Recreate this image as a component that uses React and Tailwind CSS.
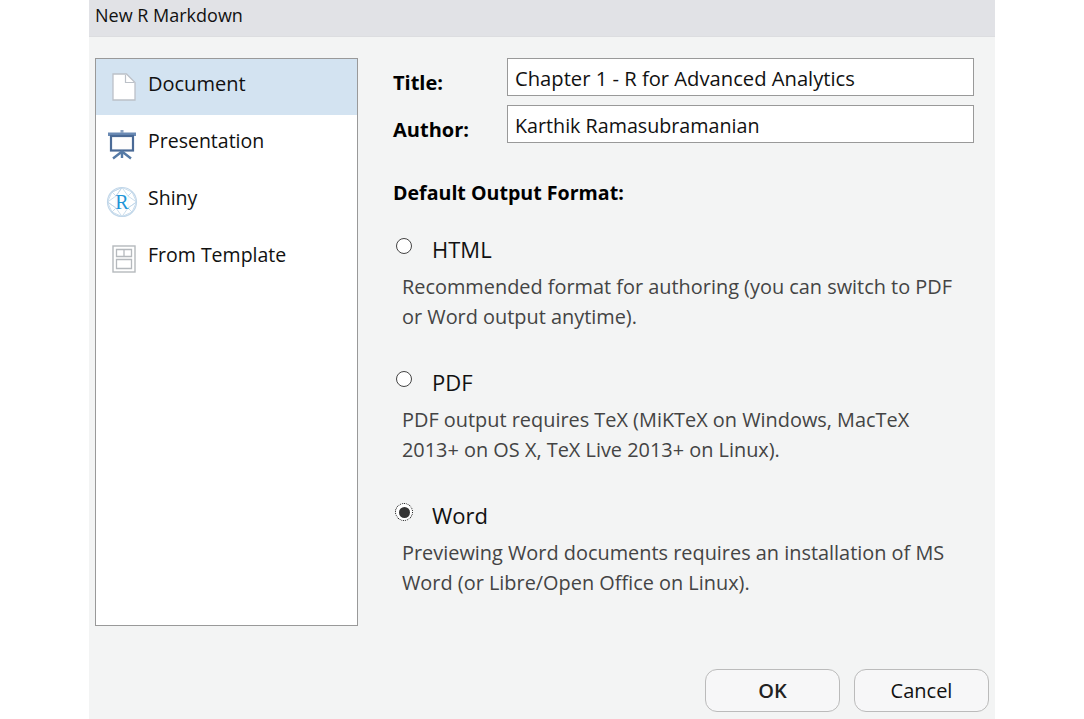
import React from 'react';

const FONT = 'font-["Open_Sans","Noto_Sans",sans-serif]';

function DocIcon() {
  return (
    <svg className="ml-[3px]" width="24" height="28" viewBox="0 0 24 28" fill="none">
      <path d="M1 1H14.5L23 9.5V27H1Z" fill="#fff" stroke="#bcc1c8" strokeWidth="1.3" />
      <path d="M13.5 2V9.5H22" stroke="#bcc1c8" strokeWidth="1.2" fill="none" />
    </svg>
  );
}

function PresentationIcon() {
  return (
    <svg width="30" height="30" viewBox="0 0 30 30" fill="none">
      <rect x="1" y="2.5" width="28" height="3.5" fill="#6a8ab4" />
      <rect x="13.5" y="0" width="3" height="3" fill="#8aa2c2" />
      <rect x="4" y="6" width="22" height="14.5" fill="#fdfdfd" stroke="#4a6a96" strokeWidth="2.2" />
      <path d="M15 20.5V28M15 21.5L6 28.5M15 21.5L24 28.5" stroke="#557aa6" strokeWidth="2.4" />
    </svg>
  );
}

function ShinyIcon() {
  return (
    <svg width="32" height="32" viewBox="0 0 32 32" fill="none">
      <circle cx="16" cy="16" r="14.5" fill="#fff" stroke="#c3d8ea" strokeWidth="1.2" />
      <path
        d="M16 1.5L26 6L30.5 16L26 26L16 30.5L6 26L1.5 16L6 6ZM16 1.5L22 10L30.5 16L22 22L16 30.5L10 22L1.5 16L10 10ZM10 10H22V22H10ZM6 6L10 10M26 6L22 10M26 26L22 22M6 26L10 22M16 1.5L10 10M16 1.5L6 6M30.5 16L22 22M1.5 16L10 22"
        stroke="#bfd5e8"
        strokeWidth="0.8"
      />
      <circle cx="16" cy="16" r="8.5" fill="#fff" fillOpacity="0.75" />
      <text x="16" y="23" textAnchor="middle" fontFamily="Liberation Serif, serif" fontSize="20" fill="#1f95d8">R</text>
    </svg>
  );
}

function TemplateIcon() {
  return (
    <svg className="ml-[3px]" width="24" height="28" viewBox="0 0 24 28" fill="none">
      <rect x="1" y="1" width="22" height="26" fill="#fff" stroke="#b5b9bd" strokeWidth="1.4" />
      <path d="M4.5 4.5H19.5V11.5H4.5ZM12 4.5V11.5M4.5 14.5H19.5V23.5H4.5Z" stroke="#b5b9bd" strokeWidth="1.3" />
    </svg>
  );
}

function Radio({ checked }) {
  return (
    <span
      className={`flex h-[16px] w-[16px] items-center justify-center rounded-full bg-white ${
        checked ? 'outline-1 outline-dotted outline-black' : 'border border-[#444]'
      }`}
    >
      {checked && <span className="h-[11px] w-[11px] rounded-full bg-[#333]" />}
    </span>
  );
}

const types = [
  { label: 'Document', icon: <DocIcon />, active: true },
  { label: 'Presentation', icon: <PresentationIcon /> },
  { label: 'Shiny', icon: <ShinyIcon /> },
  { label: 'From Template', icon: <TemplateIcon /> },
];

const formats = [
  {
    label: 'HTML',
    lines: ['Recommended format for authoring (you can switch to PDF', 'or Word output anytime).'],
  },
  {
    label: 'PDF',
    lines: ['PDF output requires TeX (MiKTeX on Windows, MacTeX', '2013+ on OS X, TeX Live 2013+ on Linux).'],
  },
  {
    label: 'Word',
    checked: true,
    lines: ['Previewing Word documents requires an installation of MS', 'Word (or Libre/Open Office on Linux).'],
  },
];

export default function App() {
  return (
    <div className={`h-[719px] w-[1084px] overflow-hidden bg-white ${FONT}`}>
      <div className="ml-[89px] flex h-full w-[906px] flex-col bg-[#f3f4f4]">
        {/* Title bar */}
        <div className="flex h-[37px] items-center border-b border-[#dcdde0] bg-[#e1e2e6] pb-[6px] pl-[6px] text-[18px] text-[#111]">
          New R Markdown
        </div>

        <div className="flex items-start pl-[6px] pt-[21px]">
          {/* Document type list */}
          <div className="h-[568px] w-[263px] shrink-0 border border-[#999] bg-white">
            {types.map((t) => (
              <div
                key={t.label}
                className={`flex items-center ${t.active ? 'mb-[1px] h-[56px] bg-[#d3e3f1]' : 'h-[57px]'}`}
              >
                <div className="flex w-[52px] justify-center">{t.icon}</div>
                <span className={`text-[#111] ${t.active ? 'pb-[6px] text-[20px]' : 'pb-[8px] text-[19.5px]'}`}>
                  {t.label}
                </span>
              </div>
            ))}
          </div>

          {/* Form */}
          <div className="ml-[35px] w-[581px]">
            <div className="flex h-[38px] items-center">
              <label className="w-[114px] pt-[12px] text-[20px] font-bold leading-[20px] text-black">Title:</label>
              <div className="flex h-[38px] w-[467px] items-center border border-[#999] bg-white pl-[7px] pt-[2px] text-[20.2px] text-[#111]">
                Chapter 1 - R for Advanced Analytics
              </div>
            </div>
            <div className="mt-[9px] flex h-[38px] items-center">
              <label className="w-[114px] pt-[12px] text-[20px] font-bold leading-[20px] text-black">Author:</label>
              <div className="flex h-[38px] w-[467px] items-center border border-[#999] bg-white pl-[7px] pt-[4px] text-[19.7px] text-[#111]">
                Karthik Ramasubramanian
              </div>
            </div>

            <div className="mt-[35px] text-[19.6px] font-bold leading-[30px] text-black">Default Output Format:</div>

            <div className="mt-[26px] flex flex-col gap-[35px]">
              {formats.map((f) => (
                <div key={f.label}>
                  <div className="flex h-[38px] items-center">
                    <div className="mb-[14px] ml-[3px] w-[36px]">
                      <Radio checked={f.checked} />
                    </div>
                    <span className="pb-[8px] text-[22px] text-[#111]">{f.label}</span>
                  </div>
                  <div className="ml-[9px] text-[19.9px] leading-[30px] text-[#444]">
                    {f.lines.map((l) => (
                      <div key={l}>{l}</div>
                    ))}
                  </div>
                </div>
              ))}
            </div>
          </div>
        </div>

        {/* Buttons */}
        <div className="mt-[43px] flex justify-end gap-[14px] pr-[6px]">
          <button className="h-[43px] w-[135px] rounded-[12px] border border-[#bbb] bg-[#f7f7f8] text-[20px] font-semibold text-[#222]">
            OK
          </button>
          <button className="h-[43px] w-[135px] rounded-[12px] border border-[#bbb] bg-[#f7f7f8] text-[20px] text-[#111]">
            Cancel
          </button>
        </div>
      </div>
    </div>
  );
}
